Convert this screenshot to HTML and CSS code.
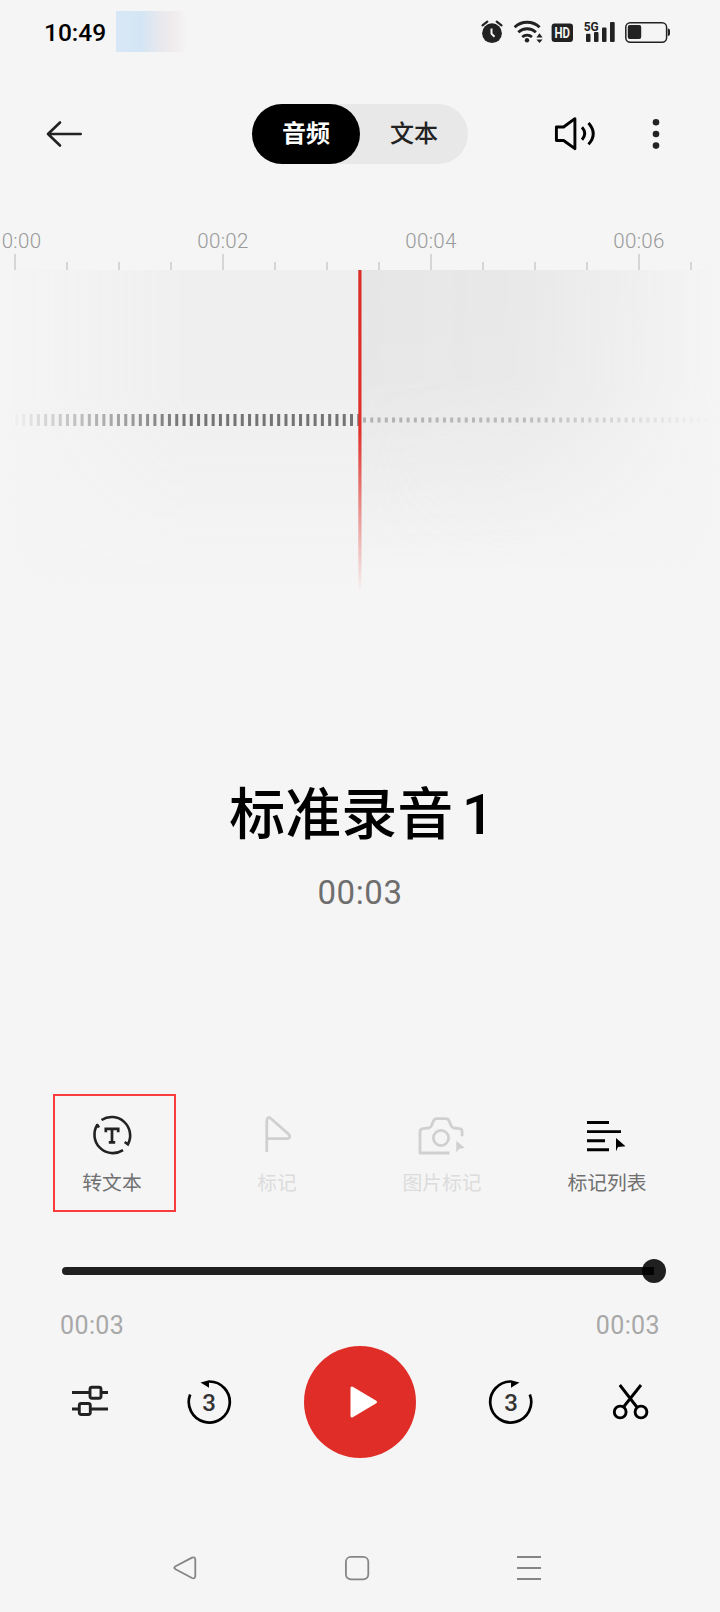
FILE: index.html
```html
<!DOCTYPE html>
<html lang="zh-CN">
<head>
<meta charset="utf-8">
<title>标准录音 1</title>
<link rel="stylesheet" href="styles.css">
</head>
<body>
<div class="screen">
  <div class="status">
    <span class="clock">10:49</span>
    <span class="smudge"></span>
    <svg class="status-icons" width="194" height="30" viewBox="480 17 194 30">
      <g fill="#222">
        <circle cx="492" cy="33.2" r="9.9"/>
        <path d="M482.5 25.3l4.8-3.6M501.5 25.3l-4.8-3.6" stroke="#222" stroke-width="2.2" stroke-linecap="round"/>
        <path d="M491.5 28.5v5.2l3 3" fill="none" stroke="#f5f5f5" stroke-width="2"/>
        <g fill="none" stroke="#222" stroke-width="2.8">
          <path d="M514.6 27.2a18.2 18.2 0 0 1 25 0"/>
          <path d="M518.3 32.2a13 13 0 0 1 17.6 0"/>
          <path d="M522.2 37a7.6 7.6 0 0 1 9.8 0"/>
        </g>
        <circle cx="527" cy="40.3" r="2.2"/>
        <path d="M539.5 33.2l3.1 4.3h-6.2zM539.5 43l3.1-3.6h-6.2z"/>
        <rect x="551.6" y="23.5" width="21.4" height="18.5" rx="3"/>
        <rect x="586" y="33.7" width="4.5" height="8.3" rx="1"/>
        <rect x="594" y="32" width="4.5" height="10" rx="1"/>
        <rect x="602" y="27.5" width="4.5" height="14.5" rx="1"/>
        <rect x="610" y="22" width="4.7" height="20" rx="1"/>
        <rect x="625.8" y="22.8" width="40.8" height="19.4" rx="4.5" fill="none" stroke="#222" stroke-width="1.5"/>
        <rect x="627.8" y="25" width="13.4" height="14" rx="2"/>
        <path d="M667.8 28.5q2.2 0 2.2 2v3.6q0 2-2.2 2z"/>
      </g>
      <text class="hd" x="562.3" y="38" text-anchor="middle" textLength="15.5" lengthAdjust="spacingAndGlyphs">HD</text>
      <text class="g5" x="583.7" y="30.5" textLength="15" lengthAdjust="spacingAndGlyphs">5G</text>
    </svg>
  </div>

  <div class="topbar">
    <svg class="back" width="36" height="28" viewBox="46 120 36 28" fill="none" stroke="#222" stroke-width="2.6" stroke-linecap="round" stroke-linejoin="round"><path d="M80.7 134H48M60 122.5L48 134l12 11.5"/></svg>
    <div class="tabs"><span class="tab tab-on">音频</span><span class="tab">文本</span></div>
    <svg class="speaker" width="42" height="36" viewBox="554 116 42 36" fill="none" stroke="#000" stroke-width="2.9"><path stroke-linejoin="round" d="M556.4 127h7.2l11.3-8.3v30l-11.3-8.2h-7.2z"/><path d="M582 127.3q5.5 6.2 0 12.4M588.5 123q9.5 10.7 0 21.4"/></svg>
    <svg width="8" height="32" viewBox="652 118 8 32" fill="#222"><circle cx="656" cy="122.3" r="3.3"/><circle cx="656" cy="134" r="3.3"/><circle cx="656" cy="145.6" r="3.3"/></svg>
  </div>

  <div class="ruler"><span class="first">0:00</span><span>00:02</span><span>00:04</span><span>00:06</span></div>
  <svg class="wave" width="720" height="346" viewBox="0 254 720 346">
    <defs>
      <linearGradient id="hl"><stop offset="0" stop-color="#fff" stop-opacity="0"/><stop offset=".08" stop-color="#fff" stop-opacity=".2"/><stop offset=".5" stop-color="#fff"/><stop offset="1" stop-color="#fff"/></linearGradient>
      <linearGradient id="hr"><stop offset="0" stop-color="#fff"/><stop offset=".45" stop-color="#fff" stop-opacity=".85"/><stop offset="1" stop-color="#fff" stop-opacity="0"/></linearGradient>
      <linearGradient id="down" x1="0" y1="0" x2="0" y2="1"><stop offset="0" stop-color="#efefef"/><stop offset=".4" stop-color="#efefef"/><stop offset="1" stop-color="#efefef" stop-opacity="0"/></linearGradient>
      <linearGradient id="downr" x1="0" y1="0" x2="0" y2="1"><stop offset="0" stop-color="#e6e6e6"/><stop offset=".35" stop-color="#e7e7e7"/><stop offset=".95" stop-color="#e7e7e7" stop-opacity="0"/></linearGradient>
      <linearGradient id="needle" x1="0" y1="0" x2="0" y2="1"><stop offset="0" stop-color="#da2d26"/><stop offset=".5" stop-color="#e0312a"/><stop offset="1" stop-color="#e0312a" stop-opacity="0"/></linearGradient>
      <mask id="ml" maskUnits="userSpaceOnUse" x="0" y="254" width="360" height="346"><rect x="10" y="254" width="350" height="346" fill="url(#hl)"/></mask>
      <mask id="mr" maskUnits="userSpaceOnUse" x="360" y="254" width="360" height="346"><rect x="360" y="254" width="356" height="346" fill="url(#hr)"/></mask>
    </defs>
    <g mask="url(#ml)"><rect y="270" width="360" height="316" fill="url(#down)"/><path d="M15 420h345" stroke="#747474" stroke-width="12" stroke-dasharray="3 4.283"/></g>
    <g mask="url(#mr)"><rect x="360" y="270" width="360" height="316" fill="url(#downr)"/><path d="M363 420h357" stroke="#b0b0b0" stroke-width="5" stroke-dasharray="3 4.267"/></g>
    <path d="M15 254v16M223 254v16M431 254v16M639 254v16" stroke="#ccc" stroke-width="1.5"/>
    <path d="M67 262v8M119 262v8M171 262v8M275 262v8M327 262v8M379 262v8M483 262v8M535 262v8M587 262v8M691 262v8" stroke="#ccc" stroke-width="1.5"/>
    <rect x="358.3" y="270" width="3.2" height="322" fill="url(#needle)"/>
  </svg>

  <h1 class="title">标准录音 1</h1>
  <div class="elapsed">00:03</div>

  <div class="tools">
    <div class="tool">
      <svg width="44" height="44" viewBox="90 1113 44 44" fill="none" stroke="#222" stroke-width="2.6"><path d="M101.5 1120a18.5 18.5 0 0 1 26.4 24.3l-3.2-2.3M97.5 1124.5a18.5 18.5 0 0 0 25.5 25.7M99 1127.500l-2.200-3.400"/><path d="M105.800 1132.300v-3.400h12.400v3.400M112 1129v13.400M108.800 1142.300h6.400" stroke-width="2.700"/></svg>
      <span>转文本</span>
      <i class="highlight"></i>
    </div>
    <div class="tool off">
      <svg width="44" height="44" viewBox="255.500 1113 44 44" fill="none" stroke="#d0d0d0" stroke-width="2.800" stroke-linejoin="round"><path d="M267.300 1152v-31.500c0-3 2-3.500 4-2l17.700 15.500c2.300 2.200 1.500 4.600-1.200 4.600h-20.500"/></svg>
      <span>标记</span>
    </div>
    <div class="tool off">
      <svg width="52" height="44" viewBox="416 1113 52 44" fill="none" stroke="#d0d0d0" stroke-width="2.800" stroke-linejoin="round"><path d="M449.500 1153H420v-21q0-3 3-3.300l5.500-.7q2.200-.3 3-2.300l1.800-4.500q1-2.500 3.500-2.500h9q2.500 0 3.500 2.500l1.800 4.500q.8 2 3 2.300l5.500.7q2.500.3 2.500 3v4.500"/><circle cx="441" cy="1138" r="7.600"/><path d="M456.300 1141v11.500l2.500-3.500 6-1.200z" fill="#d0d0d0" stroke="none"/></svg>
      <span>图片标记</span>
    </div>
    <div class="tool">
      <svg width="44" height="44" viewBox="585 1113 44 44"><path d="M587 1122.500h22M587 1131.600h34M587 1140.700h18M587 1149.800h22" stroke="#000" stroke-width="2.900"/><path d="M616 1138v13.300l2-4.300 7.500-.8z"/></svg>
      <span>标记列表</span>
    </div>
  </div>

  <div class="seek"><div class="track"></div><div class="thumb"></div></div>
  <div class="times"><span>00:03</span><span>00:03</span></div>

  <div class="controls">
    <svg width="38" height="34" viewBox="71 1385 38 34" fill="none" stroke="#222" stroke-width="2.900"><path d="M72 1392.500h17M102 1392.500h6M72 1409h6M91 1409h17"/><rect x="90" y="1387.200" width="11" height="11" rx="2"/><rect x="79.300" y="1403.500" width="11" height="11" rx="2"/></svg>
    <svg class="rewind" width="46" height="46" viewBox="186 1379 46 46"><path d="M190.200 1394.500a20.500 20.500 0 1 0 18.800-13" fill="none" stroke="#000" stroke-width="2.700"/><path d="M200.500 1382.500l8.500-2.300v7.500z"/><text x="209" y="1411" text-anchor="middle">3</text></svg>
    <div class="play"><svg width="30" height="36" viewBox="0 0 30 36"><path d="M3 4v28L26.500 18z" fill="#fff" stroke="#fff" stroke-width="3" stroke-linejoin="round"/></svg></div>
    <svg class="forward" width="46" height="46" viewBox="488 1379 46 46"><path d="M529.800 1394.500a20.500 20.500 0 1 1-18.800-13" fill="none" stroke="#000" stroke-width="2.700"/><path d="M519.500 1382.500l-8.500-2.300v7.500z"/><text x="511" y="1411" text-anchor="middle">3</text></svg>
    <svg width="38" height="38" viewBox="612 1384 38 38" fill="none" stroke="#000" stroke-width="2.900"><path d="M619.800 1386l17 22M641 1386l-17.500 22"/><circle cx="620.200" cy="1413" r="5.900"/><circle cx="641" cy="1413" r="5.900"/></svg>
  </div>

  <div class="nav">
    <svg width="26" height="26" viewBox="172 1555 26 26"><path d="M192 1557.600l-16.400 8.600q-2.600 1.500 0 3l16.400 8.800q3 1.200 3.300-2v-16.500q-.3-3-3.300-1.900z"/></svg>
    <svg width="26" height="26" viewBox="344 1555 26 26"><rect x="345.900" y="1556.800" width="22.400" height="22.500" rx="5"/></svg>
    <svg width="26" height="26" viewBox="516 1555 26 26"><path d="M517 1557h24M517 1568h24M517 1579h24"/></svg>
  </div>
</div>
</body>
</html>
```
FILE: styles.css
```css
* { box-sizing: border-box; }
body { margin: 0; background: #f5f5f5; }
svg { display: block; flex: none; }
.screen {
  width: 720px; height: 1612px; overflow: hidden;
  display: flex; flex-direction: column;
  font-family: Roboto, "Noto Sans CJK SC", sans-serif;
  color: #000;
}
.status { height: 64px; display: flex; padding-left: 44px; flex: none; }
.clock { font-size: 24.5px; font-weight: 500; line-height: 66px; width: 72px; white-space: nowrap; }
.smudge {
  width: 70px; height: 41px; margin-top: 11px;
  background: linear-gradient(90deg, #d8e7f5 0, #d3e5f4 35%, #e7e8ee 62%, #f0ebec 82%, #f5f5f5);
}
.status-icons { margin: 17px 0 0 294px; }
.hd { font: 700 15px Roboto, sans-serif; fill: #f5f5f5; }
.g5 { font: 700 12.5px Roboto, sans-serif; fill: #222; }

.topbar { height: 140px; display: flex; align-items: center; padding: 0 60px 0 46px; flex: none; }
.tabs { width: 216px; height: 60px; border-radius: 30px; background: #e8e8e8; display: flex; margin-left: 170px; }
.tab { flex: 1; text-align: center; line-height: 61px; font-size: 24px; color: #222; font-weight: 500; }
.tab-on { background: #000; color: #fff; border-radius: 30px; font-weight: 700; }
.speaker { margin: 0 56px 0 86px; }

.ruler { display: flex; margin: 25px 0 1px -89px; height: 24px; flex: none; }
.ruler span { width: 208px; flex: none; text-align: center; font-size: 20.5px; line-height: 24px; font-weight: 300; letter-spacing: .3px; color: #999; }
.ruler .first { padding-left: 13px; }
.wave { flex: none; }

.title { margin: 180px 0 0; height: 70px; line-height: 70px; text-align: center; font-size: 56px; font-weight: 500; word-spacing: -5px; padding-left: 3px; }
.elapsed { margin-top: 23px; height: 40px; line-height: 40px; text-align: center; font-size: 33px; letter-spacing: .6px; color: #6e6e6e; }

.tools { display: flex; padding-left: 29.5px; margin-top: 200px; height: 104px; flex: none; }
.tool { width: 165px; position: relative; display: flex; flex-direction: column; align-items: center; }
.tool span { margin-top: 13px; font-size: 19.8px; line-height: 28px; color: #707070; }
.tool.off span { color: #dcdcdc; }
.highlight { position: absolute; left: 23.5px; top: -19px; width: 123px; height: 118px; border: 2px solid #fb3c3e; }

.seek { display: flex; align-items: center; height: 24px; margin: 42px 0 0 62px; flex: none; }
.track { width: 592px; height: 8px; background: #1f1f1f; border-radius: 4px 0 0 4px; }
.thumb { width: 24px; height: 24px; margin-left: -12px; border-radius: 50%; background: rgba(0, 0, 0, .87); }
.times { display: flex; justify-content: space-between; padding: 0 60px; margin-top: 28px; font-size: 25px; letter-spacing: .4px; line-height: 30px; color: #a8a8a8; flex: none; }

.controls { display: flex; align-items: center; padding-left: 71px; height: 112px; margin-top: 5px; flex: none; }
.controls text { font: 500 24px Roboto, sans-serif; fill: #333; }
.rewind { margin-left: 77px; }
.play { width: 112px; height: 112px; margin: 0 72px; border-radius: 50%; background: #e12d27; display: flex; align-items: center; justify-content: center; padding-left: 7px; }
.forward { margin-right: 78px; }
.nav { display: flex; gap: 146px; padding-left: 172px; margin-top: 97px; }
.nav svg { fill: none; stroke: #858585; stroke-width: 1.8; }
```
